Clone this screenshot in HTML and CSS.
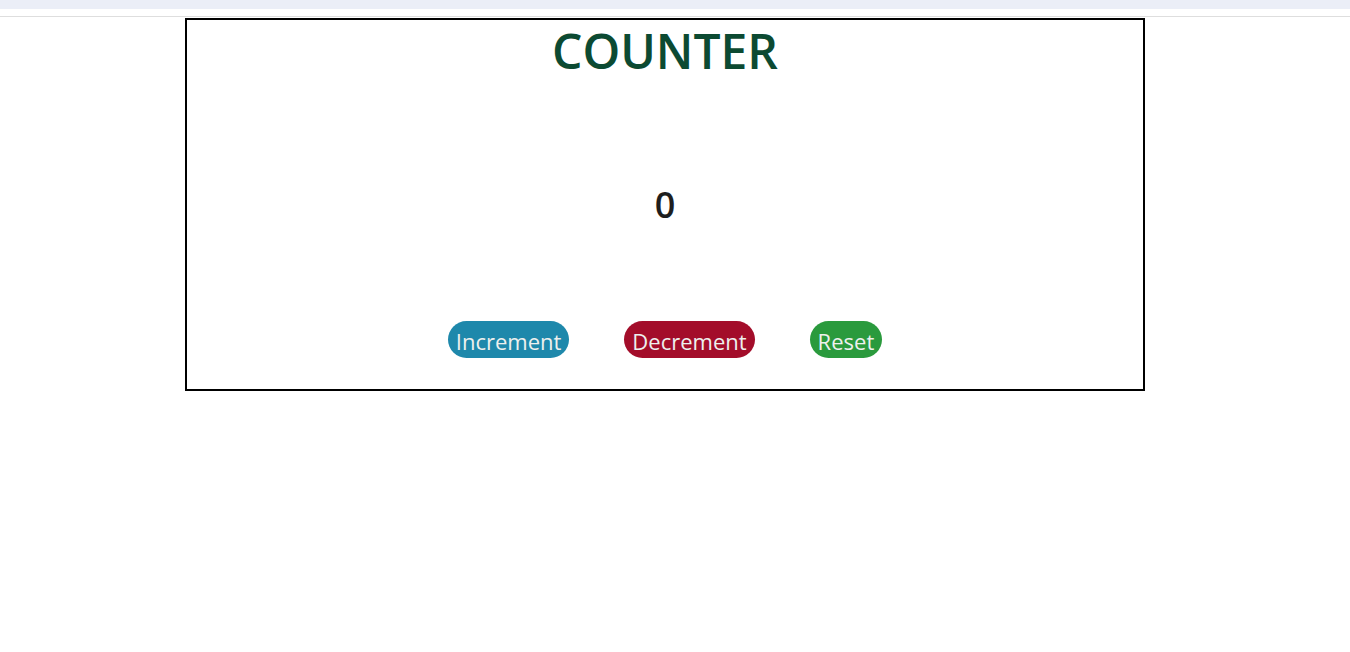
FILE: index.html
```html
<!DOCTYPE html>
<html>
<head>
<meta charset="utf-8">
<link rel="stylesheet" href="styles.css">
</head>
<body>
<div class="topbar"></div>
<div class="subbar"></div>
<main class="counter">
  <h1 class="title">COUNTER</h1>
  <div class="value">0</div>
  <div class="actions">
    <button class="btn inc">Increment</button>
    <button class="btn dec">Decrement</button>
    <button class="btn reset">Reset</button>
  </div>
</main>
</body>
</html>
```
FILE: styles.css
```css
html, body {
  margin: 0;
  padding: 0;
  background: #ffffff;
  font-family: "Open Sans", "Noto Sans", sans-serif;
}
.topbar {
  height: 9px;
  background: #ebeef7;
}
.subbar {
  height: 7px;
  border-bottom: 1px solid #dedede;
}
.counter {
  box-sizing: border-box;
  width: 960px;
  height: 373px;
  margin: 1px 0 0 185px;
  border: 2px solid #000;
  display: flex;
  flex-direction: column;
  align-items: center;
}
.title {
  margin: -1px 0 0;
  font-size: 48px;
  font-weight: 600;
  color: #0c4a32;
  line-height: 64px;
  letter-spacing: 0;
}
.value {
  margin-top: 100px;
  font-size: 36px;
  font-weight: 600;
  color: #1e1e1e;
  line-height: 44px;
}
.actions {
  margin-top: 94px;
  display: flex;
  gap: 55px;
}
.btn {
  height: 37px;
  border: none;
  border-radius: 19px;
  padding: 3px 8px 0;
  font-family: "Open Sans", "Noto Sans", sans-serif;
  font-size: 22px;
  line-height: 34px;
  color: #eef0ee;
  cursor: pointer;
}
.inc { background: #1e88ab; }
.dec { background: #a30d2a; }
.reset { background: #2a9a3d; }
```
